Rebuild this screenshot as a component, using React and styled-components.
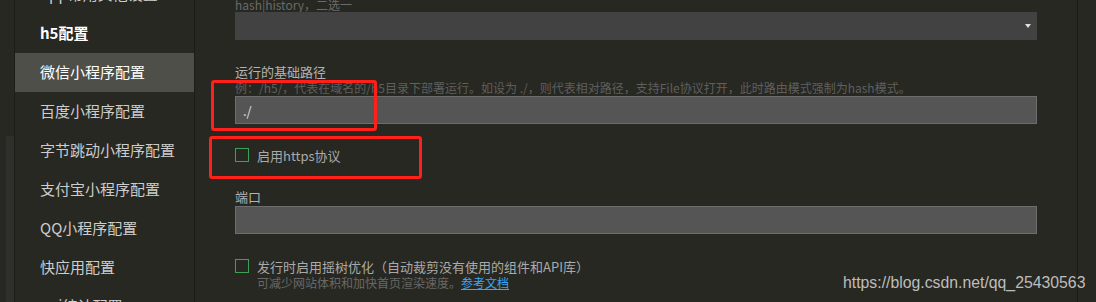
import React from "react";
import styled, { createGlobalStyle } from "styled-components";

const Global = createGlobalStyle`
  html, body { margin: 0; padding: 0; background: #272822; overflow: hidden; }
  body { font-family: "Microsoft YaHei", "Noto Sans CJK SC", "Noto Sans", sans-serif; }
  #root { width: 1096px; height: 302px; }
`;

const Frame = styled.div`
  position: relative;
  display: flex;
  width: 1096px;
  height: 302px;
  background: #272822;
  overflow: hidden;
`;

const Gutter = styled.div`
  width: 14px;
  border-right: 1px solid #1c1d19;
  display: flex;
  flex-direction: column;
  align-items: flex-end;
`;

const GutterThumb = styled.div`
  margin-top: 136px;
  width: 8px;
  flex: 1;
  background: #2f302b;
`;

const Sidebar = styled.nav`
  width: 179px;
  border-right: 1px solid #1c1d19;
  display: flex;
  flex-direction: column;
  margin-top: -25px;
`;

const NavItem = styled.div`
  flex: 0 0 39px;
  height: 39px;
  display: flex;
  align-items: center;
  padding-left: 25px;
  font-size: 15px;
  line-height: 18px;
  padding-bottom: 2px;
  box-sizing: border-box;
  color: ${(p) => (p.$bright ? "#ffffff" : "#cdcdcd")};
  font-weight: ${(p) => (p.$bold ? 700 : 400)};
  background: ${(p) => (p.$active ? "#4f4f49" : "transparent")};
  white-space: nowrap;
`;

const Content = styled.main`
  width: 883px;
  padding: 0 40px;
  box-sizing: border-box;
  border-right: 1px solid #1c1d19;
  display: flex;
  flex-direction: column;
`;

const RightStrip = styled.div`
  flex: 1;
`;

const Hint = styled.div`
  font-size: 12px;
  line-height: 14px;
  color: ${(p) => p.$color || "#5f5f5f"};
  margin-top: ${(p) => p.$mt || 0}px;
  white-space: nowrap;
`;

const Label = styled.div`
  font-size: 13px;
  line-height: 18px;
  color: #b3b3b3;
  margin-top: ${(p) => p.$mt || 0}px;
`;

const Select = styled.div`
  height: 28px;
  background: #424242;
  display: flex;
  align-items: center;
  justify-content: flex-end;
  padding-right: 6px;
`;

const Arrow = styled.span`
  width: 0;
  height: 0;
  border-left: 3.5px solid transparent;
  border-right: 3.5px solid transparent;
  border-top: 4px solid #e0e0e0;
`;

const Input = styled.div`
  height: 28px;
  box-sizing: border-box;
  background: #555555;
  border: 1px solid #6d6d6d;
  margin-top: ${(p) => p.$mt || 0}px;
  display: flex;
  align-items: center;
  padding-left: 7px;
  font-size: 13px;
  color: #e0e0e0;
`;

const CheckRow = styled.label`
  display: flex;
  align-items: center;
  gap: 8px;
  height: 16px;
  margin-top: ${(p) => p.$mt || 0}px;
  font-size: 13px;
  color: #aaaaaa;
  white-space: nowrap;
`;

const Box = styled.span`
  width: 14px;
  height: 14px;
  box-sizing: border-box;
  border: 1px solid #3e9f56;
  flex: none;
`;

const SubText = styled.div`
  font-size: 12px;
  line-height: 16px;
  color: #686868;
  padding-left: 22px;
  margin-top: 1px;
`;

const Link = styled.a`
  color: #3ba6f2;
  text-decoration: underline;
`;

const Annotation = styled.div`
  position: absolute;
  left: ${(p) => p.$x}px;
  top: ${(p) => p.$y}px;
  width: ${(p) => p.$w}px;
  height: ${(p) => p.$h}px;
  box-sizing: border-box;
  border: 3px solid #ff2019;
  border-radius: 3px;
  pointer-events: none;
`;

const Watermark = styled.div`
  position: absolute;
  left: 843px;
  top: 273px;
  font-family: "Liberation Sans", Arial, sans-serif;
  font-size: 15.8px;
  line-height: 20px;
  color: #bdbdbd;
  white-space: nowrap;
`;

const navItems = [
  { t: "App常用其他设置" },
  { t: "h5配置", bright: true, bold: true },
  { t: "微信小程序配置", bright: true, active: true },
  { t: "百度小程序配置" },
  { t: "字节跳动小程序配置" },
  { t: "支付宝小程序配置" },
  { t: "QQ小程序配置" },
  { t: "快应用配置" },
  { t: "uni统计配置" },
];

export default function App() {
  return (
    <Frame>
      <Global />
      <Gutter>
        <GutterThumb />
      </Gutter>
      <Sidebar>
        {navItems.map((n) => (
          <NavItem key={n.t} $bright={n.bright} $bold={n.bold} $active={n.active}>
            {n.t}
          </NavItem>
        ))}
      </Sidebar>
      <Content>
        <Hint $color="#6a6a6a" $mt={-2}>hash|history，二选一</Hint>
        <Select>
          <Arrow />
        </Select>
        <Label $mt={23}>运行的基础路径</Label>
        <Hint>例：/h5/，代表在域名的/h5目录下部署运行。如设为 ./，则代表相对路径，支持File协议打开，此时路由模式强制为hash模式。</Hint>
        <Input $mt={1}>./</Input>
        <CheckRow $mt={23}>
          <Box />
          启用https协议
        </CheckRow>
        <Label $mt={25}>端口</Label>
        <Input />
        <CheckRow $mt={24}>
          <Box />
          发行时启用摇树优化（自动裁剪没有使用的组件和API库）
        </CheckRow>
        <SubText>
          可减少网站体积和加快首页渲染速度。<Link>参考文档</Link>
        </SubText>
      </Content>
      <RightStrip />
      <Annotation $x={211} $y={80} $w={166} $h={51} />
      <Annotation $x={209} $y={136} $w={213} $h={43} />
      <Watermark>https://blog.csdn.net/qq_25430563</Watermark>
    </Frame>
  );
}
